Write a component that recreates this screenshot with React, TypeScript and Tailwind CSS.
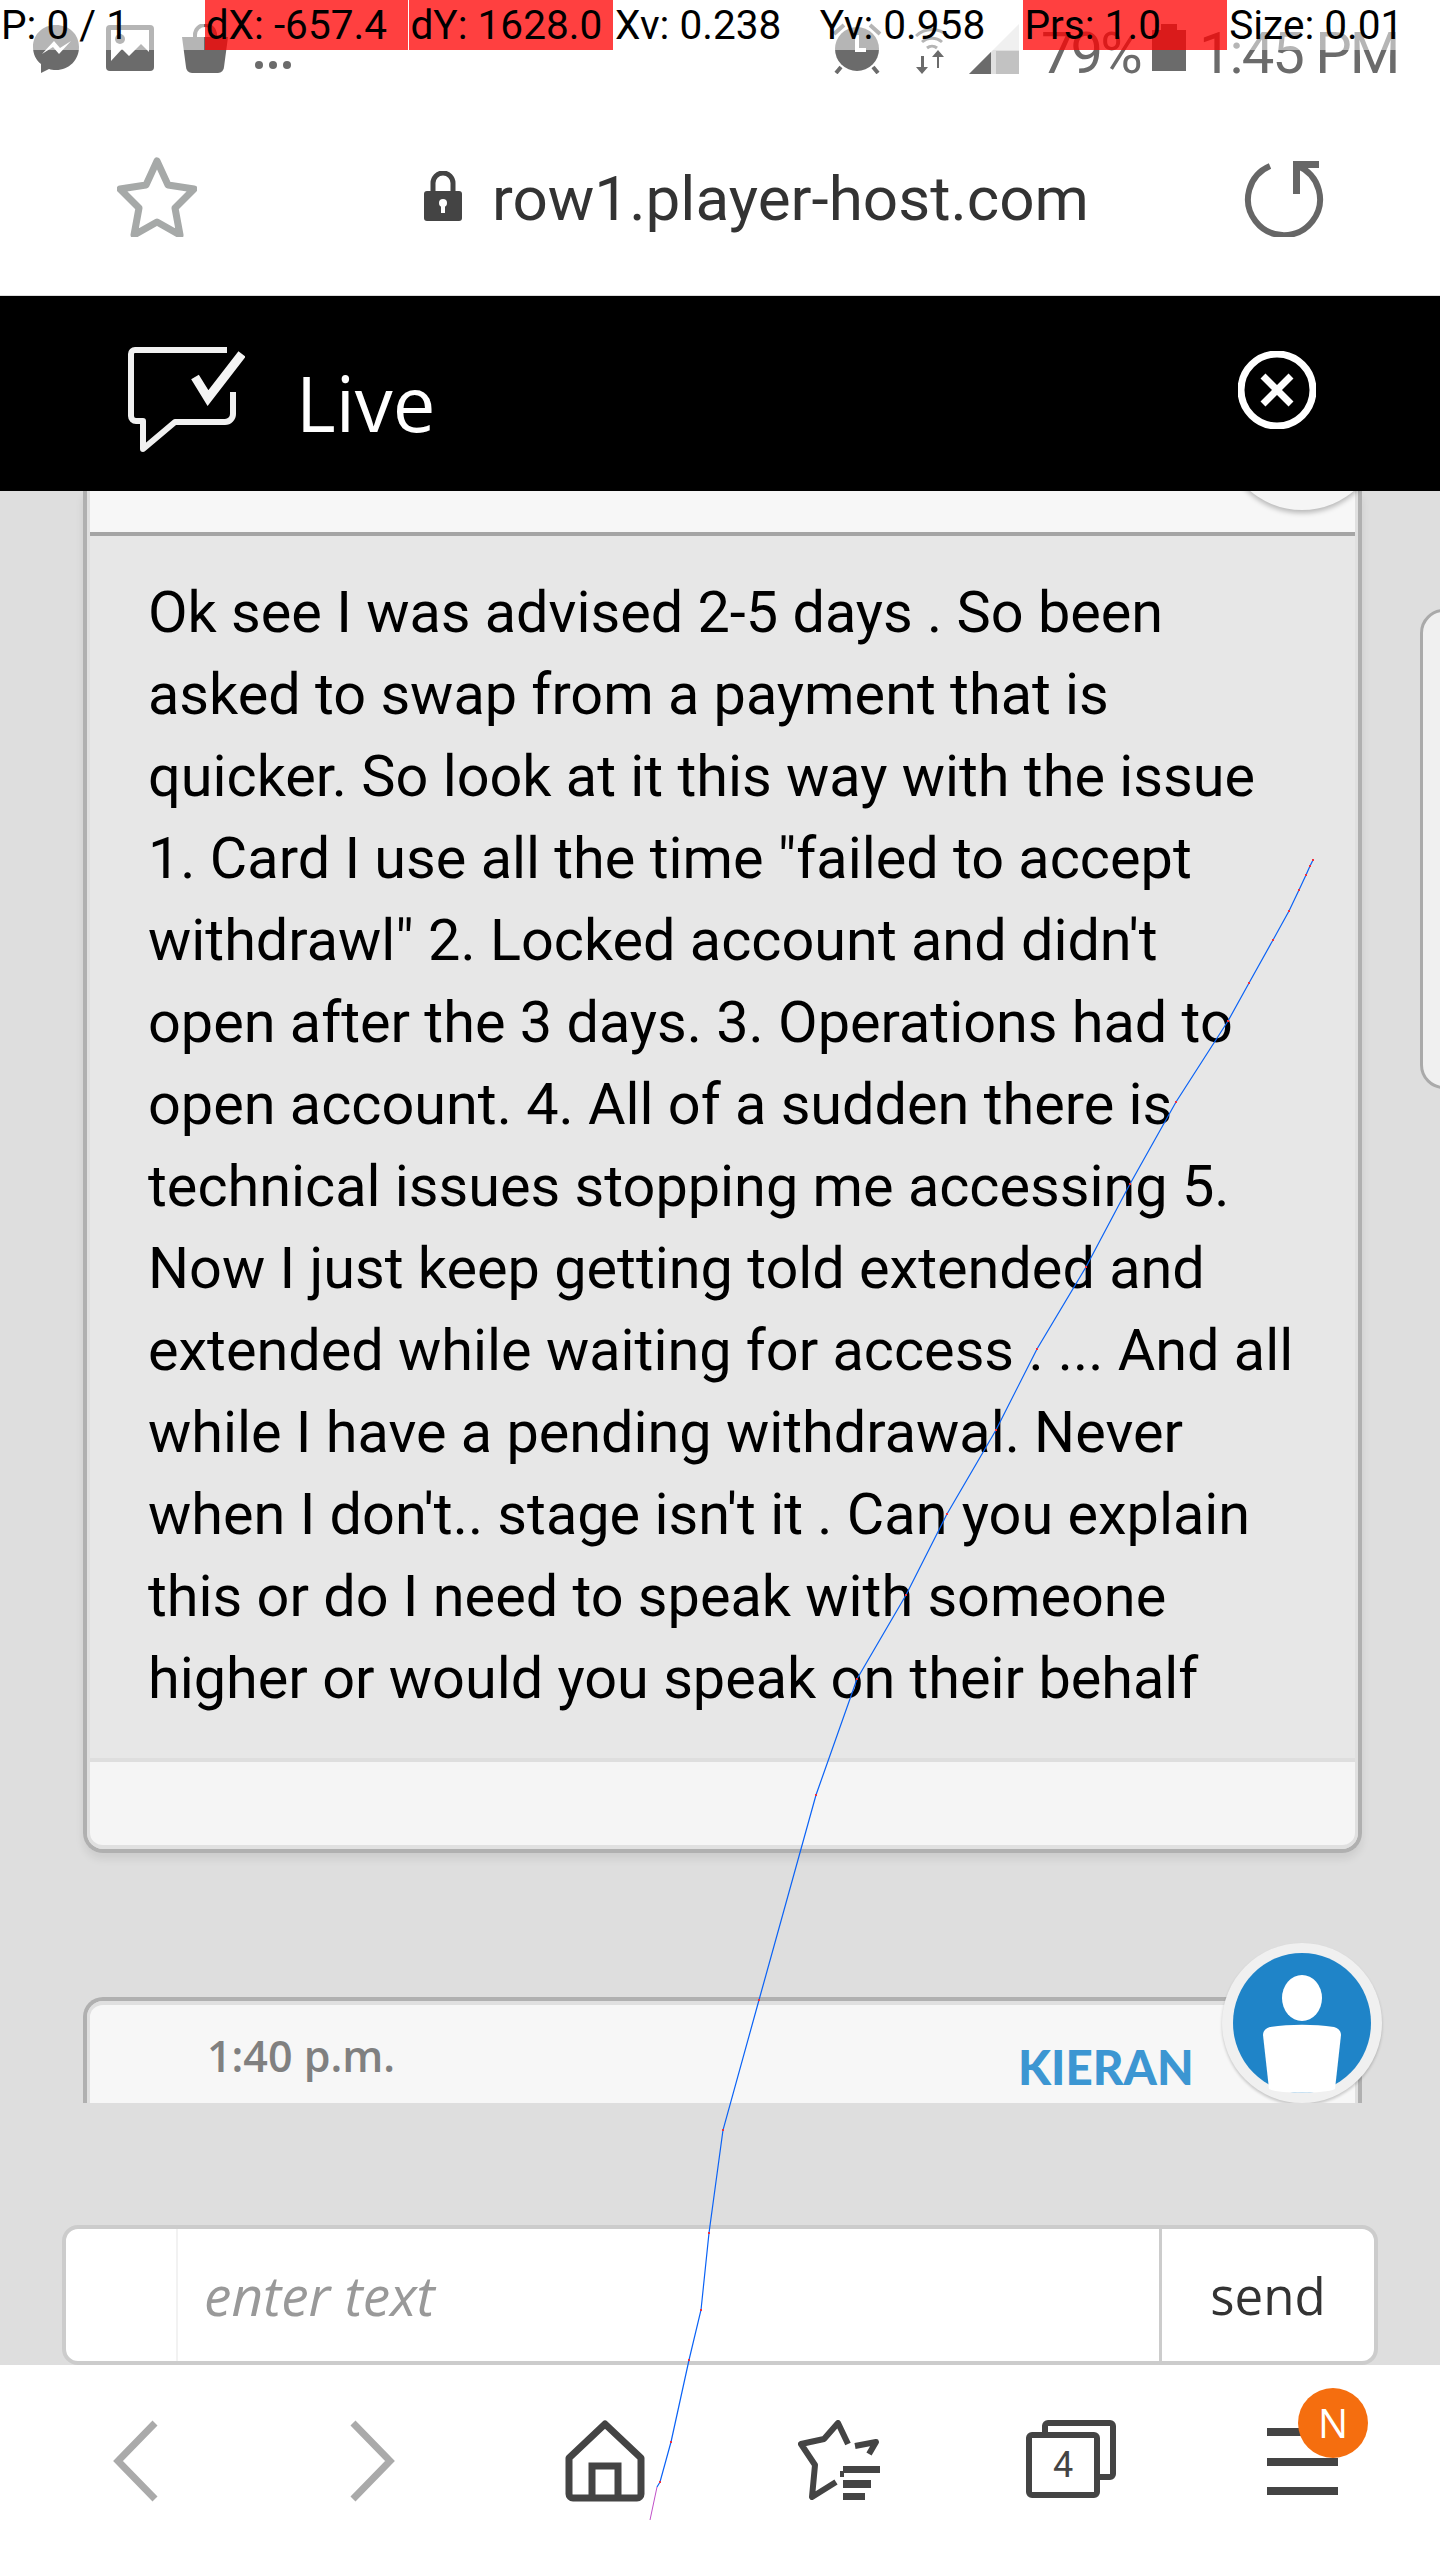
const LINES = [
  "Ok see I was advised 2-5 days . So been",
  "asked to swap from a payment that is",
  "quicker. So look at it this way with the issue",
  '1. Card I use all the time "failed to accept',
  "withdrawl\" 2. Locked account and didn't",
  "open after the 3 days. 3. Operations had to",
  "open account. 4. All of a sudden there is",
  "technical issues stopping me accessing 5.",
  "Now I just keep getting told extended and",
  "extended while waiting for access . ... And all",
  "while I have a pending withdrawal. Never",
  "when I don't.. stage isn't it . Can you explain",
  "this or do I need to speak with someone",
  "higher or would you speak on their behalf",
];

const POINTER_CELLS = [
  { text: "P: 0 / 1", hot: false },
  { text: "dX: -657.4", hot: true },
  { text: "dY: 1628.0", hot: true },
  { text: "Xv: 0.238", hot: false },
  { text: "Yv: 0.958", hot: false },
  { text: "Prs: 1.0", hot: true },
  { text: "Size: 0.01", hot: false },
];

const TRACE: [number, number][] = [
  [1313, 860], [1310, 866], [1306, 875], [1299, 890], [1289, 911], [1273, 940], [1249, 983],
  [1228, 1021], [1176, 1102], [1130, 1184], [1086, 1267], [1037, 1349], [996, 1430], [947, 1514],
  [906, 1595], [857, 1679], [816, 1795], [759, 2000], [723, 2130], [709, 2233], [701, 2310],
  [689, 2360], [671, 2442], [660, 2482], [657, 2487],
];

function StatusIcons() {
  return (
    <div className="flex h-[75px] items-end pb-[1px] text-[#6b6b6b]">
      <svg width="48" height="50" viewBox="0 0 48 50" className="ml-[32px]">
        <path d="M24 1C11 1 1 10 1 23c0 7 3 13 8 17v9l8-4c2 .6 4 1 7 1 13 0 23-10 23-23S37 1 24 1z" fill="currentColor" />
        <path d="M10 30l12-13 6 7 11-7-12 13-6-7z" fill="#fff" />
      </svg>
      <svg width="48" height="46" viewBox="0 0 48 46" className="ml-[26px] mb-[3px]">
        <rect x="0" y="0" width="48" height="46" rx="4" fill="currentColor" />
        <rect x="5" y="5" width="38" height="36" fill="#fff" />
        <circle cx="14" cy="14" r="5" fill="currentColor" />
        <path d="M5 36l11-12 7 7 12-12 8 8v14H5z" fill="currentColor" />
      </svg>
      <svg width="46" height="50" viewBox="0 0 46 50" className="ml-[28px]">
        <path d="M13 14V11a10 10 0 0120 0v3" fill="none" stroke="currentColor" strokeWidth="4" />
        <path d="M0 13h46l-4 30a6 6 0 01-6 6H10a6 6 0 01-6-6z" fill="currentColor" />
      </svg>
      <div className="ml-[27px] mb-[5px] flex gap-[6px]">
        <span className="h-[8px] w-[8px] rounded-full bg-[#6b6b6b]" />
        <span className="h-[8px] w-[8px] rounded-full bg-[#6b6b6b]" />
        <span className="h-[8px] w-[8px] rounded-full bg-[#6b6b6b]" />
      </div>
      <svg width="50" height="52" viewBox="0 0 50 52" className="ml-[541px]">
        <circle cx="25" cy="27" r="22" fill="currentColor" />
        <path d="M25 13v15h9" fill="none" stroke="#fff" strokeWidth="4" />
        <path d="M2 12l10-9M48 12L38 3M9 45l-5 6M41 45l5 6" stroke="currentColor" strokeWidth="4" />
      </svg>
      <svg width="34" height="50" viewBox="0 0 34 50" className="ml-[33px]">
        <path d="M1 12a23 23 0 0132 0M7 18a15 15 0 0120 0M12 24a8 8 0 0110 0" fill="none" stroke="currentColor" strokeWidth="3" />
        <path d="M6 32v11H1l6 7 6-7H9V32zM24 44V33h5l-6-7-6 7h5v11z" fill="currentColor" />
      </svg>
      <svg width="50" height="50" viewBox="0 0 50 50" className="ml-[20px]">
        <path d="M50 0v50H0z" fill="#e0e0e0" />
        <path d="M50 27v23H27V27z" fill="#c2c2c2" />
        <path d="M22 28v22H0z" fill="currentColor" />
      </svg>
      <div className="ml-[22px] mb-[-9px] w-[98px] font-['Roboto',sans-serif] text-[58px] leading-[60px] tracking-[-3px] whitespace-nowrap text-[#6b6b6b]">
        79%
      </div>
      <div className="relative ml-[13px] mb-[3px] h-[41px] w-[34px] bg-[#6b6b6b]">
        <span className="absolute left-[9px] top-[-6px] h-[6px] w-[16px] bg-[#6b6b6b]" />
      </div>
      <div className="ml-[13px] mb-[-9px] font-['Roboto',sans-serif] text-[58px] leading-[60px] tracking-[-2px] whitespace-nowrap text-[#6b6b6b]">
        1:45 PM
      </div>
    </div>
  );
}

function PointerBar() {
  return (
    <div className="absolute inset-x-0 top-0 z-20 grid h-[50px] grid-cols-[repeat(7,203.7px)] gap-[1px] font-['Roboto',sans-serif] text-[40.6px] leading-[50px] text-black">
      {POINTER_CELLS.map((c) => (
        <div
          key={c.text}
          className={c.hot ? "overflow-hidden whitespace-nowrap bg-[rgba(255,0,0,0.75)] pl-[1px]" : "whitespace-nowrap bg-[rgba(255,255,255,0.5)] pl-[1px]"}
        >
          {c.text}
        </div>
      ))}
    </div>
  );
}

function Trace() {
  const pts = TRACE.map((p) => p.join(",")).join(" ");
  return (
    <svg width="1440" height="2560" viewBox="0 0 1440 2560" className="pointer-events-none absolute left-0 top-0 z-30">
      <polyline points={pts} fill="none" stroke="#0a62f5" strokeWidth="1.2" />
      <path d="M657 2487L650 2520" stroke="#c050c8" strokeWidth="1" />
      {TRACE.slice(0, 24).map((p) => (
        <rect key={p.join()} x={p[0] - 1} y={p[1] - 1} width="2" height="2" fill="#f03040" />
      ))}
    </svg>
  );
}

function Avatar() {
  return (
    <div className="flex h-[160px] w-[160px] items-center justify-center rounded-full bg-[#f0f0f0] shadow-[0_2px_3px_rgba(0,0,0,0.2)]">
      <svg width="138" height="140" viewBox="0 0 138 140">
        <ellipse cx="69" cy="70" rx="69" ry="70" fill="#1f84c8" />
        <ellipse cx="69" cy="45" rx="20" ry="23" fill="#fff" />
        <path d="M30 82c0-4 3-7 7-8 21-3 43-3 64 0 4 1 7 4 7 8l-6 54c-10 5-56 5-66 0z" fill="#fff" />
      </svg>
    </div>
  );
}

function BottomNav() {
  return (
    <div className="flex h-[195px] items-start bg-white pt-[55px] text-[#444]">
      <svg width="46" height="82" viewBox="0 0 46 82" className="ml-[113px]">
        <path d="M42 3L5 41l37 38" fill="none" stroke="#aaa" strokeWidth="7" />
      </svg>
      <svg width="46" height="82" viewBox="0 0 46 82" className="ml-[190px]">
        <path d="M4 3l37 38L4 79" fill="none" stroke="#aaa" strokeWidth="7" />
      </svg>
      <svg width="80" height="82" viewBox="0 0 80 82" className="ml-[170px]">
        <path d="M40 4L4 38v36a4 4 0 004 4h64a4 4 0 004-4V38z" fill="none" stroke="currentColor" strokeWidth="7" strokeLinejoin="round" />
        <path d="M27 78V46h26v32" fill="none" stroke="currentColor" strokeWidth="7" />
      </svg>
      <svg width="82" height="80" viewBox="0 0 82 80" className="ml-[153px]">
        <path d="M46 54l-4 0M57 26l21-4-7 12M38 62l-24 15 3-32L3 24l23-5L40 3l10 21" fill="none" stroke="currentColor" strokeWidth="6" strokeLinejoin="round" />
        <path d="M45 46h37v7H45zM45 60h28v8H45zM45 73h22v7H45z" fill="currentColor" />
      </svg>
      <div className="relative ml-[146px] h-[78px] w-[90px]">
        <div className="absolute right-0 top-0 h-[60px] w-[74px] rounded-[6px] border-[6px] border-[#444]" />
        <div className="absolute bottom-0 left-0 flex h-[66px] w-[74px] items-center justify-center rounded-[6px] border-[6px] border-[#444] bg-white font-['Roboto',sans-serif] text-[36px] leading-none text-[#444]">
          4
        </div>
      </div>
      <div className="relative ml-[151px] flex h-[75px] w-[71px] flex-col justify-between pt-[8px]">
        <span className="h-[8px] bg-[#444]" />
        <span className="h-[8px] bg-[#444]" />
        <span className="h-[8px] bg-[#444]" />
        <span className="absolute left-[31px] top-[-32px] flex h-[70px] w-[70px] items-center justify-center rounded-full bg-[#f56e0f] font-['Open_Sans',sans-serif] text-[40px] leading-none text-white">
          N
        </span>
      </div>
    </div>
  );
}

export default function App() {
  return (
    <div className="relative flex h-[2560px] w-[1440px] flex-col overflow-hidden bg-white">
      <PointerBar />
      <StatusIcons />

      {/* browser address bar */}
      <div className="flex h-[221px] items-center border-b border-[#ddd] bg-white pt-[24px]">
        <svg width="80" height="80" viewBox="0 0 80 80" className="ml-[117px]">
          <path d="M40 4l11 24 26 4-19 19 5 27-23-13-23 13 5-27L3 32l26-4z" fill="none" stroke="#a6a9a8" strokeWidth="7" strokeLinejoin="round" />
        </svg>
        <svg width="38" height="50" viewBox="0 0 38 50" className="ml-[227px] mb-[2px]">
          <path d="M9 22V12a10 10 0 0120 0v10" fill="none" stroke="#444" strokeWidth="5" />
          <rect x="0" y="20" width="38" height="30" rx="3" fill="#444" />
          <circle cx="19" cy="32" r="4" fill="#fff" />
          <rect x="17" y="33" width="4" height="9" fill="#fff" />
        </svg>
        <div className="ml-[30px] mt-[4px] font-['Roboto',sans-serif] text-[62px] leading-none text-[#333]">row1.player-host.com</div>
        <svg width="80" height="80" viewBox="0 0 80 80" className="ml-[155px]">
          <path d="M26 9a36 36 0 1028 0" fill="none" stroke="#666" strokeWidth="6" />
          <path d="M49 4h26v7H56v26h-7z" fill="#666" />
        </svg>
      </div>

      {/* chat header */}
      <div className="flex h-[195px] items-start bg-black">
        <svg width="118" height="106" viewBox="0 0 118 106" className="ml-[127px] mt-[50px]">
          <path d="M100 4H8a4 4 0 00-4 4v62a5 5 0 005 5h7v28l32-27h50a8 8 0 008-8V46" fill="none" stroke="#f0f0f0" strokeWidth="6" strokeLinejoin="round" />
          <path d="M68 31l13 21 34-44" fill="none" stroke="#f4f4f4" strokeWidth="9" />
        </svg>
        <div className="ml-[51px] mt-[69px] font-['Open_Sans',sans-serif] text-[76px] leading-none text-white">Live</div>
        <svg width="78" height="78" viewBox="0 0 78 78" className="ml-[802px] mt-[55px]">
          <circle cx="39" cy="39" r="36" fill="none" stroke="#fff" strokeWidth="7" />
          <path d="M25 25l28 28M53 25L25 53" stroke="#fff" strokeWidth="7" />
        </svg>
      </div>

      {/* transcript, clipped where the composer begins */}
      <div className="relative flex-1 bg-[#dedede]">
        <div className="relative h-[1612px] overflow-hidden">
          <div className="relative ml-[83px] w-[1279px] rounded-b-[20px] border-x-4 border-b-4 border-[#b0b0b0] shadow-[0_6px_8px_rgba(0,0,0,0.08)]">
            <div className="overflow-hidden rounded-b-[16px] border-x-[3px] border-b-[4px] border-[#e0e0e0]">
              <div className="h-[45px] border-b-4 border-[#a5a5a5] bg-[#f7f7f7]" />
              <div className="box-border bg-[#e7e7e7] pb-[38px] pl-[58px] pt-[36px] font-['Roboto',sans-serif] text-[57.6px] leading-[82px] text-black">
                {LINES.map((line) => (
                  <div key={line} className="whitespace-nowrap">
                    {line}
                  </div>
                ))}
              </div>
              <div className="h-[87px] border-t-4 border-[#dedede] bg-[#f5f5f5]" />
            </div>
            <div className="absolute right-[-24px] top-[-141px] z-10">
              <div className="h-[160px] w-[160px] rounded-full bg-[#f5f5f5] shadow-[0_3px_5px_rgba(0,0,0,0.25)]" />
            </div>
          </div>

          <div className="relative ml-[83px] mt-[144px] h-[200px] w-[1279px] rounded-t-[20px] border-x-4 border-t-4 border-[#b0b0b0]">
            <div className="h-full rounded-t-[16px] border-x-[3px] border-t-[4px] border-[#e0e0e0] bg-[#f7f7f7]">
              <div className="flex items-start pl-[117px] pt-[23px]">
                <span className="font-['Open_Sans',sans-serif] text-[43px] font-semibold leading-[56px] text-[#808080]">1:40 p.m.</span>
                <span className="ml-[623px] mt-[11px] font-['Lato',sans-serif] text-[47.5px] font-black leading-[56px] text-[#3c96d2]">KIERAN</span>
              </div>
            </div>
            <div className="absolute right-[-24px] top-[-58px]">
              <Avatar />
            </div>
          </div>
        </div>

        {/* scroll tab at the right edge */}
        <div className="absolute right-[-10px] top-[118px] h-[480px] w-[30px] rounded-l-[24px] border-[3px] border-[#aaa] bg-[#f0f0f0]" />

        {/* composer */}
        <div className="absolute bottom-0 left-[62px] flex h-[140px] w-[1316px] rounded-[16px] border-4 border-[#ccc] bg-white">
          <div className="w-[112px] border-r-2 border-[#f2f2f2]" />
          <div className="flex flex-1 items-center pl-[26px] font-['Open_Sans',sans-serif] text-[55px] italic text-[#999]">enter text</div>
          <div className="flex w-[215px] items-center justify-center border-l-[3px] border-[#ccc] font-['Open_Sans',sans-serif] text-[51px] text-[#333]">send</div>
        </div>
      </div>

      <BottomNav />
      <Trace />
    </div>
  );
}
